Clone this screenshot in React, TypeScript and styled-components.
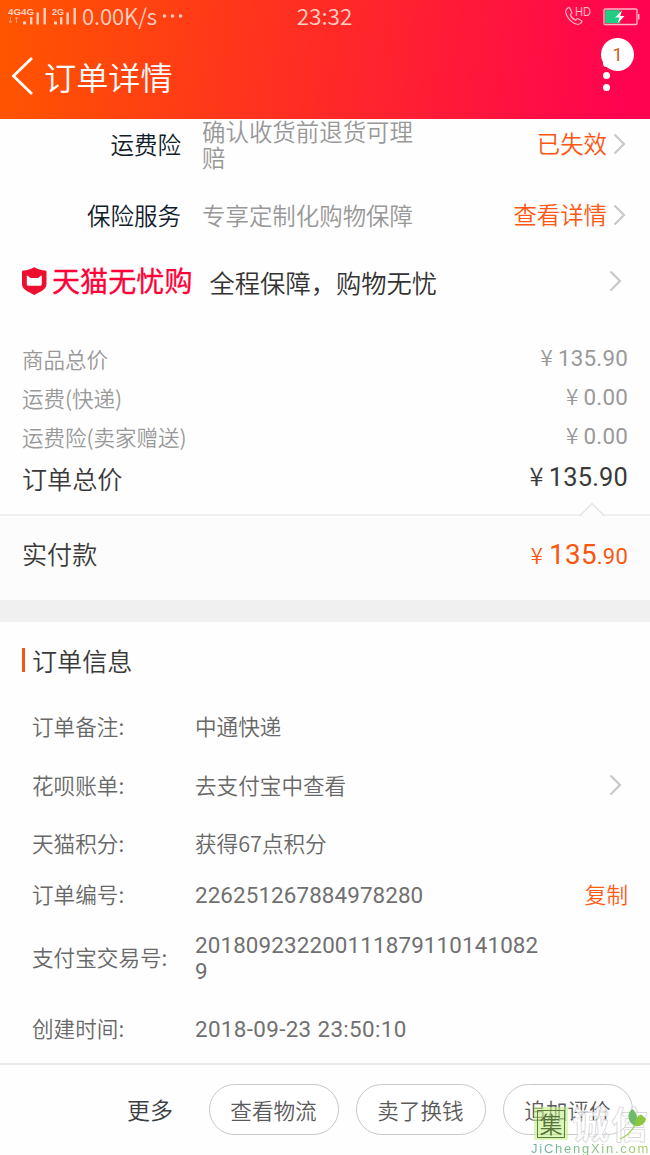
import React from 'react';
import styled, { createGlobalStyle } from 'styled-components';

const GlobalStyle = createGlobalStyle`
  * { box-sizing: border-box; }
  html, body { margin: 0; padding: 0; background: #fff; }
  body { font-family: "Noto Sans CJK SC", "Noto Sans", sans-serif; font-weight: 350; }
  svg { display: block; flex: none; }
`;

const digits = '"Roboto", "Noto Sans CJK SC", sans-serif';

const Page = styled.div`
  position: relative;
  width: 650px;
  height: 1155px;
  overflow: hidden;
  display: flex;
  flex-direction: column;
  background: #fefefe;
`;

const Header = styled.header`
  height: 119px;
  flex: none;
  color: #fff;
  background: linear-gradient(97deg, #ff5400 2%, #ff2a26 50%, #ff0350 96%);
`;

const StatusBar = styled.div`
  height: 34px;
  display: grid;
  grid-template-columns: 1fr auto 1fr;
  align-items: center;
  padding: 0 10px 0 8px;
  color: #ffd0c2;
`;

const StatusGroup = styled.div<{ $end?: boolean }>`
  display: flex;
  align-items: center;
  justify-content: ${p => (p.$end ? 'flex-end' : 'flex-start')};
`;

const Speed = styled.span`
  margin: -4px 0 0 5px;
  font-size: 22.2px;
  line-height: 30px;
  letter-spacing: -0.1px;
`;

const Clock = styled.span`
  margin-top: -3px;
  padding-left: 1px;
  font-size: 22.6px;
  line-height: 30px;
`;

const TitleBar = styled.div`
  height: 85px;
  display: flex;
  align-items: center;
  padding: 0 40px 0 11px;
`;

const Title = styled.h1`
  margin: -2px 0 0 10px;
  flex: 1;
  font-size: 32.2px;
  line-height: 44px;
  font-weight: 350;
`;

const MenuDots = styled.div`
  position: relative;
  width: 8px;
  height: 34px;
  display: flex;
  flex-direction: column;
  align-items: center;
  gap: 5px;
`;

const Dot = styled.i`
  width: 7px;
  height: 7px;
  flex: none;
  border-radius: 50%;
  background: #fff;
`;

const Badge = styled.span`
  position: absolute;
  left: -1px;
  top: -22px;
  width: 33px;
  height: 33px;
  border-radius: 50%;
  background: #fff;
  color: #d2622a;
  font-family: ${digits};
  font-size: 19px;
  font-weight: 400;
  line-height: 34px;
  text-align: center;
`;

const ServiceList = styled.section`
  height: 195px;
  flex: none;
  overflow: hidden;
  display: flex;
  flex-direction: column;
  justify-content: flex-end;
`;

const ServiceRow = styled.div<{ $h: number }>`
  height: ${p => p.$h}px;
  flex: none;
  display: flex;
  align-items: center;
  padding: 0 24px 1px 0;
`;

const ServiceName = styled.div`
  width: 181px;
  text-align: right;
  font-size: 23.5px;
  line-height: 30px;
  color: #10202b;
`;

const ServiceDesc = styled.div`
  width: 216px;
  margin-left: 21px;
  font-size: 23.45px;
  line-height: 26px;
  color: #989898;
`;

const ServiceLink = styled.div`
  flex: 1;
  display: flex;
  align-items: center;
  justify-content: flex-end;
  gap: 6px;
  font-size: 23.4px;
  line-height: 30px;
  color: #ff5712;
`;

const LinkText = styled.span`
  margin-top: -3px;
`;

const Guarantee = styled(ServiceRow)`
  padding: 0 28px 3px 21px;
`;

const Brand = styled.span`
  margin: -2px 0 0 4px;
  font-size: 28.1px;
  line-height: 36px;
  font-weight: 400;
  color: #ff0038;
  -webkit-text-stroke: 0.3px #ff0038;
  white-space: nowrap;
`;

const Slogan = styled.span`
  flex: 1;
  margin: 2px 0 0 17px;
  font-size: 25.3px;
  line-height: 34px;
  color: #333;
  white-space: nowrap;
`;

const Prices = styled.section`
  height: 200px;
  flex: none;
  padding: 25px 22px 0;
`;

const PriceRow = styled.div<{ $total?: boolean }>`
  height: ${p => (p.$total ? 43 : 39)}px;
  display: flex;
  align-items: center;
  justify-content: space-between;
  font-size: ${p => (p.$total ? 25.1 : 21.5)}px;
  line-height: 38px;
  color: ${p => (p.$total ? '#3a3a3a' : '#999')};
`;

const Amount = styled.span<{ $size: number }>`
  display: flex;
  align-items: baseline;
  gap: 5px;
  margin-top: -3px;
  font-family: ${digits};
  font-weight: 400;
  letter-spacing: 0.2px;
  font-size: ${p => p.$size}px;
`;

const Yen = styled.span`
  font-family: "Noto Sans CJK SC", sans-serif;
  font-size: 1em;
  font-weight: 350;
`;

const Paid = styled.section`
  position: relative;
  height: 86px;
  flex: none;
  display: flex;
  align-items: center;
  justify-content: space-between;
  padding: 0 22px 10px;
  border-top: 2px solid #f0f0f0;
  background: #fcfcfc;
  font-size: 25.1px;
  color: #3a3a3a;
`;

const Notch = styled.svg`
  position: absolute;
  right: 45px;
  top: -14px;
`;

const PaidAmount = styled.span`
  display: flex;
  align-items: baseline;
  padding-top: 4px;
  color: #f9560f;
  font-family: ${digits};
  font-size: 22px;
  font-weight: 400;
  letter-spacing: 0.2px;
  line-height: 40px;
`;

const PaidWhole = styled.span`
  margin-left: 6px;
  font-size: 27.8px;
  letter-spacing: 0.3px;
`;

const Divider = styled.div`
  height: 22px;
  flex: none;
  background: #f0f0f0;
`;

const Info = styled.section`
  height: 441px;
  flex: none;
`;

const InfoTitle = styled.h2`
  height: 78px;
  margin: 0;
  display: flex;
  align-items: center;
  gap: 7px;
  padding: 0 0 2px 22px;
  font-size: 25.1px;
  line-height: 34px;
  font-weight: 350;
  color: #3a3a3a;
`;

const Mark = styled.i`
  width: 3px;
  height: 24px;
  background: #f2561b;
`;

const InfoRow = styled.div<{ $h: number }>`
  height: ${p => p.$h}px;
  display: flex;
  align-items: center;
  padding: 0 22px 1px 32px;
  font-size: 21.6px;
  line-height: 26px;
  color: #686868;
`;

const Label = styled.div`
  width: 163px;
  flex: none;
  white-space: nowrap;
`;

const Value = styled.div<{ $spacing?: number; $numeric?: boolean }>`
  flex: 1;
  letter-spacing: ${p => p.$spacing ?? 0}px;
  ${p => p.$numeric && `font-family: ${digits}; font-size: 22.4px; font-weight: 400; color: #707070; padding-top: 2px;`}
`;

const Copy = styled.span`
  color: #ff5a14;
`;

const ArrowSlot = styled.span`
  margin-right: 6px;
`;

const Footer = styled.footer`
  flex: 1;
  display: flex;
  align-items: center;
  justify-content: flex-end;
  gap: 17px;
  padding: 0 17px 2px 0;
  border-top: 2px solid #e9e9e9;
`;

const More = styled.span`
  margin-right: 19px;
  font-size: 23px;
  color: #3c3f42;
`;

const Pill = styled.button`
  width: 130px;
  height: 51px;
  padding: 0 1px 0 0;
  border: 1px solid #c8c8c8;
  border-radius: 26px;
  background: #fff;
  font: inherit;
  font-size: 21.6px;
  color: #5a5a5a;
  white-space: nowrap;
`;

const Watermark = styled.div`
  position: absolute;
  left: 530px;
  top: 1106px;
  width: 122px;
  height: 49px;
`;

const Seal = styled.div`
  position: absolute;
  left: 4px;
  top: 1px;
  width: 34px;
  height: 33px;
  display: flex;
  align-items: center;
  justify-content: center;
  background: rgba(196, 238, 138, 0.6);
`;

const SealInner = styled.span`
  width: 28px;
  height: 28px;
  border: 1.5px solid #5c7c38;
  color: #56733a;
  font-size: 23px;
  line-height: 24px;
  text-align: center;
`;

const Outline = styled.span`
  position: absolute;
  left: 42px;
  top: -5px;
  font-size: 37px;
  line-height: 44px;
  font-weight: 700;
  letter-spacing: 2px;
  white-space: nowrap;
  color: rgba(255, 255, 255, 0.75);
  -webkit-text-stroke: 0.7px #d2d0d4;
`;

const Leaf = styled.svg`
  position: absolute;
  left: 88px;
  top: 2px;
`;

const Site = styled.span`
  position: absolute;
  left: 1px;
  top: 35px;
  font-family: "Liberation Sans", sans-serif;
  font-size: 13px;
  line-height: 16px;
  font-weight: 400;
  letter-spacing: 1.75px;
  white-space: nowrap;
  color: transparent;
  background: linear-gradient(90deg, #6cb0a8, #7fbf80 45%, #a5cc62);
  background-clip: text;
  -webkit-background-clip: text;
`;

const Chevron = () => (
  <svg width="13" height="22" viewBox="0 0 13 22" fill="none" stroke="#c8c8c8" strokeWidth="2.2">
    <path d="M1.5 1.5 11 11 1.5 20.5" />
  </svg>
);

const Signal = () => (
  <svg width="69" height="20" viewBox="0 0 69 20" fill="#ffd0c2">
    <g fontFamily="Liberation Sans, sans-serif" fontSize="8.500" fontWeight="700">
      <text x="0" y="7.500" textLength="26" lengthAdjust="spacingAndGlyphs">4G4G</text>
      <text x="44" y="7.500" textLength="12" lengthAdjust="spacingAndGlyphs">2G</text>
    </g>
    <path d="M2.5 10v6M1 14l1.500 2 1.500-2M8.500 10v6M7 12l1.500-2 1.500 2" stroke="#ffa384" strokeWidth=".9" fill="none" />
    <path d="M15 14.500h3v3h-3zM22 10h2.400v7.500H22zM28.500 5.500h2.400v12h-2.400zM35.500 1h2.400v16.500h-2.400zM46 14.500h3v3h-3zM52 10h2.400v7.500H52zM58.500 5.500h2.400v12h-2.400zM65.500 1h2.400v16.500h-2.400z" />
  </svg>
);

const EllipsisIcon = styled.svg`
  margin: -2px 0 0 5px;
`;

const Ellipsis = () => (
  <EllipsisIcon width="22" height="6" viewBox="0 0 22 6" fill="#ffd0c2">
    <circle cx="2.500" cy="3" r="1.800" />
    <circle cx="10.500" cy="3" r="1.800" />
    <circle cx="18.500" cy="3" r="1.800" />
  </EllipsisIcon>
);

const CallIcon = styled.svg`
  margin-top: -3px;
`;

const CallHd = () => (
  <CallIcon width="28" height="22" viewBox="0 0 28 22" fill="none" stroke="#ffb6c8" strokeWidth="1.200">
    <path d="M4.500 2.500C3 3.500 1.500 4.500 1.600 6.500c.8 6.500 6.500 12 12.400 13 2 0 3-1.300 3.900-2.600.2-.5 0-.9-.4-1.200l-3.300-2c-.6-.3-1-.2-1.400.3l-1.200 1.300C9 14 7 11.800 6.300 9.700l1.300-1.400c.4-.4.4-.8.1-1.300L5.700 2.900c-.3-.5-.7-.7-1.200-.4z" />
    <text x="11" y="11" fontFamily="Liberation Sans, sans-serif" fontSize="13" textLength="16" lengthAdjust="spacingAndGlyphs" fill="#ffb6c8" stroke="none">HD</text>
  </CallIcon>
);

const BatteryIcon = styled.svg`
  margin: -1px 0 0 11px;
`;

const Battery = () => (
  <BatteryIcon width="37" height="18" viewBox="0 0 37 18">
    <rect x="1" y="1" width="33" height="15.500" rx="1" fill="none" stroke="#ffb6c8" strokeWidth="1.300" />
    <rect x="2.200" y="2.200" width="15" height="13" fill="#1fce83" />
    <path d="M35 6h1.500v5.500H35z" fill="#ffb6c8" />
    <path d="M19 2.500 12 9.500h4.500L14.500 15.500 21.500 8h-4.300z" fill="#fff" />
  </BatteryIcon>
);

const Shield = () => (
  <svg width="27" height="28" viewBox="0 0 27 28">
    <path d="M13.300.2C10 2.200 6 3.200 2.300 3.400 1.300 3.500 1 4 1 5v12c0 5.500 6 7.500 12.300 11C19.600 24.500 25.500 22.500 25.500 17V5c0-1-.3-1.500-1.300-1.600-3.600-.2-7.600-1.200-10.900-3.200z" fill="#ec0f30" />
    <path d="M5.800 8.400c1.900.1 2.500 2.600 4.500 2.600h6c2 0 2.600-2.500 4.500-2.600V17c0 1.200-.6 1.800-1.800 1.800H7.600c-1.200 0-1.800-.6-1.800-1.800z" fill="#fff" />
  </svg>
);

type Price = { label: string; value: string; total?: boolean };
const prices: Price[] = [
  { label: '商品总价', value: '135.90' },
  { label: '运费(快递)', value: '0.00' },
  { label: '运费险(卖家赠送)', value: '0.00' },
  { label: '订单总价', value: '135.90', total: true },
];

type Detail = {
  label: string;
  lines: string[];
  h: number;
  spacing?: number;
  numeric?: boolean;
  arrow?: boolean;
  copy?: boolean;
};
const details: Detail[] = [
  { label: '订单备注:', lines: ['中通快递'], h: 52 },
  { label: '花呗账单:', lines: ['去支付宝中查看'], h: 66, arrow: true },
  { label: '天猫积分:', lines: ['获得67点积分'], h: 51 },
  { label: '订单编号:', lines: ['226251267884978280'], h: 51, numeric: true, spacing: 0.1, copy: true },
  { label: '支付宝交易号:', lines: ['201809232200111879110141082', '9'], h: 74, numeric: true, spacing: 0.13 },
  { label: '创建时间:', lines: ['2018-09-23 23:50:10'], h: 69, numeric: true, spacing: 0.35 },
];

export default function App() {
  return (
    <Page>
      <GlobalStyle />
      <Header>
        <StatusBar>
          <StatusGroup>
            <Signal />
            <Speed>0.00K/s</Speed>
            <Ellipsis />
          </StatusGroup>
          <Clock>23:32</Clock>
          <StatusGroup $end>
            <CallHd />
            <Battery />
          </StatusGroup>
        </StatusBar>
        <TitleBar>
          <svg width="23" height="40" viewBox="0 0 23 40" fill="none" stroke="#fff" strokeWidth="2.800">
            <path d="M21 1 2.500 19 21 37" />
          </svg>
          <Title>订单详情</Title>
          <MenuDots>
            <Dot />
            <Dot />
            <Dot />
            <Badge>1</Badge>
          </MenuDots>
        </TitleBar>
      </Header>

      <ServiceList>
        <ServiceRow $h={71}>
          <ServiceName>运费险</ServiceName>
          <ServiceDesc>确认收货前退货可理赔</ServiceDesc>
          <ServiceLink><LinkText>已失效</LinkText><Chevron /></ServiceLink>
        </ServiceRow>
        <ServiceRow $h={71}>
          <ServiceName>保险服务</ServiceName>
          <ServiceDesc>专享定制化购物保障</ServiceDesc>
          <ServiceLink><LinkText>查看详情</LinkText><Chevron /></ServiceLink>
        </ServiceRow>
        <Guarantee $h={63}>
          <Shield />
          <Brand>天猫无忧购</Brand>
          <Slogan>全程保障，购物无忧</Slogan>
          <Chevron />
        </Guarantee>
      </ServiceList>

      <Prices>
        {prices.map(p => (
          <PriceRow key={p.label} $total={p.total}>
            <span>{p.label}</span>
            <Amount $size={p.total ? 25.4 : 22.4}>
              <Yen>¥</Yen>
              {p.value}
            </Amount>
          </PriceRow>
        ))}
      </Prices>

      <Paid>
        <Notch width="26" height="15" viewBox="0 0 26 15">
          <path d="M1.500 14.500 13 2.500 24.500 14.500z" fill="#fcfcfc" />
          <path d="M1 13.500 13 1.500 25 13.500" fill="none" stroke="#e4e4e4" strokeWidth="1.500" />
        </Notch>
        <span>实付款</span>
        <PaidAmount><Yen>¥</Yen><PaidWhole>135</PaidWhole>.90</PaidAmount>
      </Paid>

      <Divider />

      <Info>
        <InfoTitle><Mark />订单信息</InfoTitle>
        {details.map(d => (
          <InfoRow key={d.label} $h={d.h}>
            <Label>{d.label}</Label>
            <Value $spacing={d.spacing} $numeric={d.numeric}>
              {d.lines.map(line => <div key={line}>{line}</div>)}
            </Value>
            {d.arrow && <ArrowSlot><Chevron /></ArrowSlot>}
            {d.copy && <Copy>复制</Copy>}
          </InfoRow>
        ))}
      </Info>

      <Footer>
        <More>更多</More>
        <Pill>查看物流</Pill>
        <Pill>卖了换钱</Pill>
        <Pill>追加评价</Pill>
      </Footer>

      <Watermark>
        <Seal><SealInner>集</SealInner></Seal>
        <Outline>诚信</Outline>
        <Leaf width="30" height="34" viewBox="0 0 30 34">
          <path d="M17 17C14 23 9 28 2 31" fill="none" stroke="#a5cf62" strokeWidth="1.300" />
          <path d="M17 18C10 15 8 6 14 1c5 3 7 10 3 17z" fill="#6fbb6a" />
          <path d="M17 18C17 10 21 6 24 7c1 2 3 2 4 4-1 5-6 8-11 7z" fill="#8cc63f" />
        </Leaf>
        <Site>JiChengXin.com</Site>
      </Watermark>
    </Page>
  );
}
